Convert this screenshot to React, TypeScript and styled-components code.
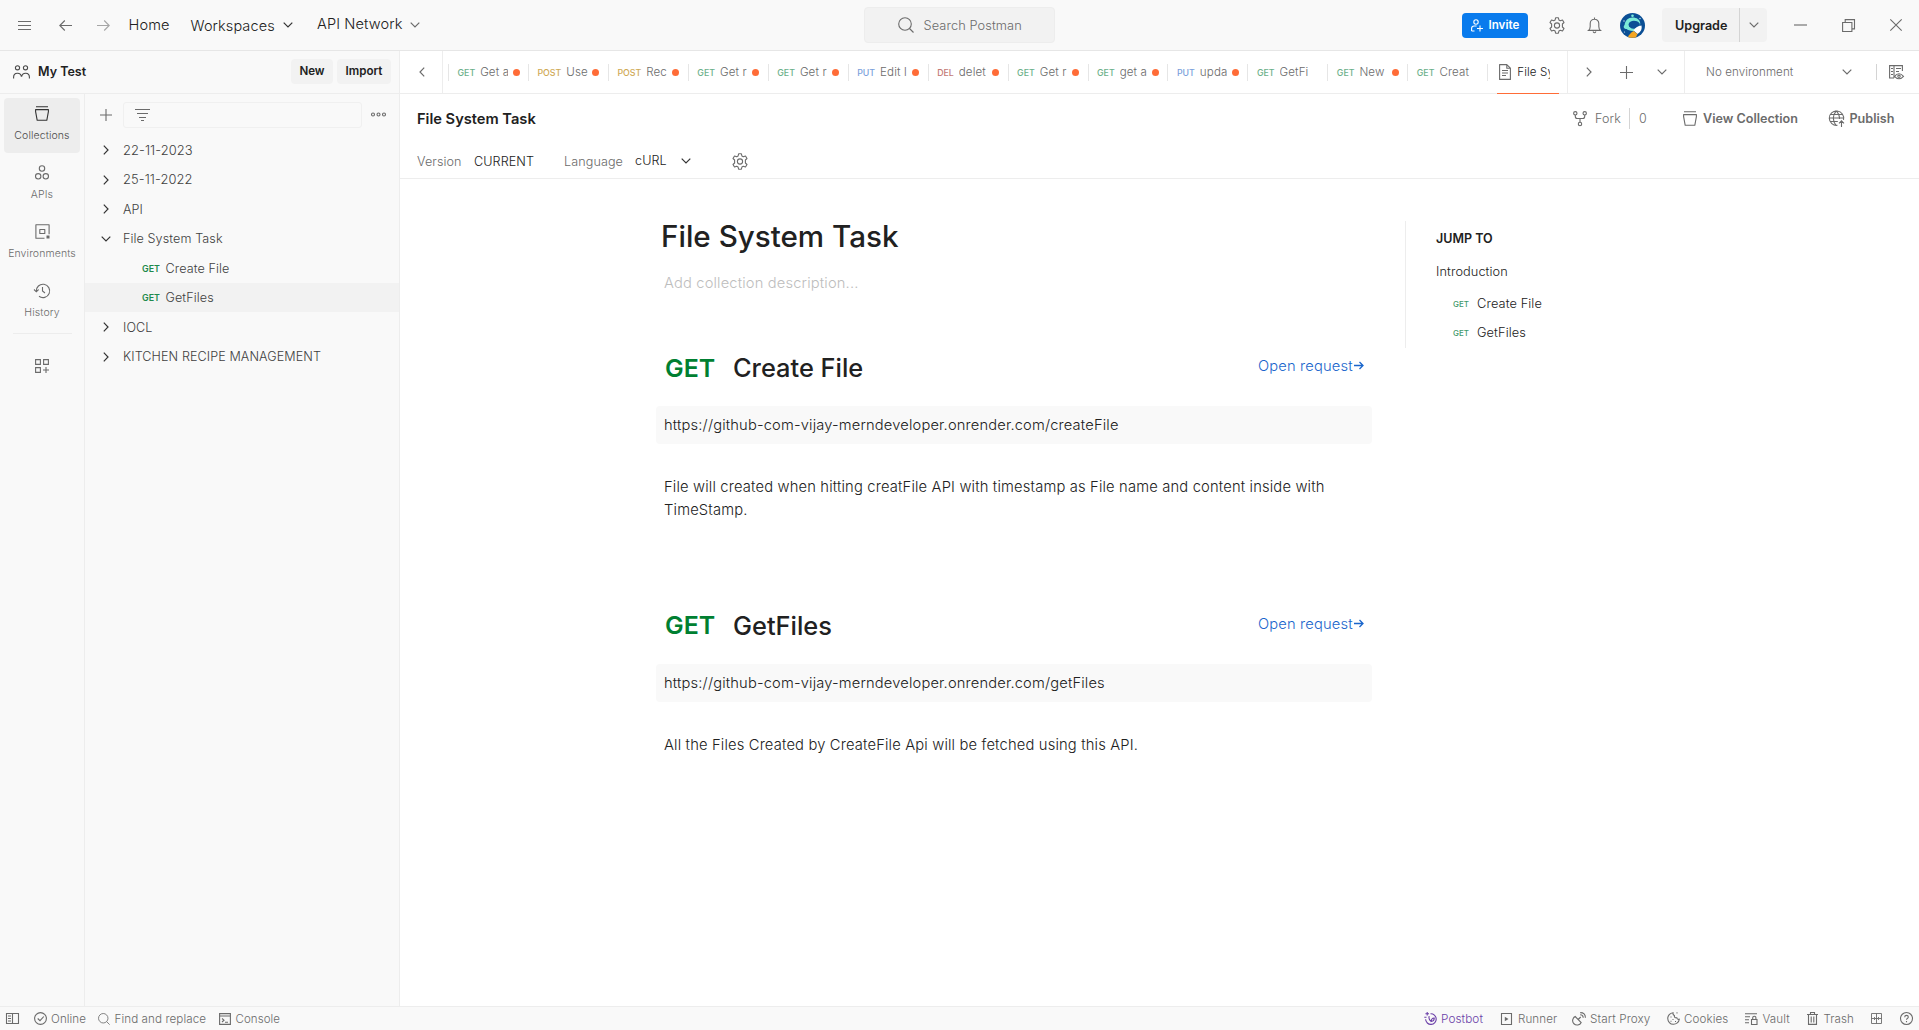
import React from "react";
import styled, { createGlobalStyle } from "styled-components";

const GlobalStyle = createGlobalStyle`
  * { box-sizing: border-box; }
  body {
    margin: 0;
    background: #fff;
    color: #212121;
    font-family: Inter, "Liberation Sans", sans-serif;
    font-weight: 350;
    overflow: hidden;
  }
`;

const line = "#ededed";
const grey = "#6b6b6b";

/* ---------- primitives ---------- */

const Label = styled.span<{ $size?: number; $weight?: number; $color?: string; $w?: number; $ml?: number; $up?: number }>`
  flex: none;
  white-space: nowrap;
  font-size: ${(p) => p.$size ?? 12.5}px;
  font-weight: ${(p) => p.$weight ?? 350};
  letter-spacing: ${(p) => (p.$weight ? "0" : "0.007em")};
  color: ${(p) => p.$color ?? "#212121"};
  width: ${(p) => (p.$w ? `${p.$w}px` : "auto")};
  margin-left: ${(p) => p.$ml ?? 0}px;
  padding-bottom: ${(p) => (p.$up ?? 0) * 2}px;
`;

const Svg = styled.svg<{ $ml?: number; $color?: string; $sw?: number }>`
  flex: none;
  display: block;
  overflow: visible;
  fill: none;
  stroke: ${(p) => p.$color ?? grey};
  stroke-width: ${(p) => p.$sw ?? 1.1};
  margin-left: ${(p) => p.$ml ?? 0}px;
`;

const Bar = styled.span<{ $h: number; $ml?: number; $color?: string }>`
  flex: none;
  width: 1px;
  height: ${(p) => p.$h}px;
  margin-left: ${(p) => p.$ml ?? 0}px;
  background: ${(p) => p.$color ?? "#d4d4d4"};
`;

type IconProps = { w: number; h: number; ml?: number; color?: string; sw?: number; children: React.ReactNode };
const Icon = ({ w, h, ml, color, sw, children }: IconProps) => (
  <Svg width={w} height={h} viewBox={`0 0 ${w} ${h}`} $ml={ml} $color={color} $sw={sw} aria-hidden>
    {children}
  </Svg>
);

type Small = { ml?: number; color?: string };
const ChevronDown = ({ ml, color }: Small) => (
  <Icon w={10} h={6} ml={ml} color={color} sw={1.2}><path d="M.7.7 5 5 9.3.7" /></Icon>
);
const ChevronRight = ({ ml, color }: Small) => (
  <Icon w={6} h={10} ml={ml} color={color} sw={1.2}><path d="M.8.7 5 5 .8 9.3" /></Icon>
);
const Gear = ({ ml }: Small) => (
  <Icon w={16} h={17} ml={ml}>
    <path d="M6.6.8h2.8l.5 2.2 1.4.8 2.2-.8 1.5 2.5L13.4 7v3l1.6 1.5-1.5 2.5-2.2-.8-1.4.8-.5 2.2H6.6L6.1 14l-1.4-.8-2.2.8L1 11.5 2.6 10V7L1 5.5 2.500 3l2.200.8L6.100 3z" strokeLinejoin="round" />
    <circle cx="8" cy="8.500" r="2.600" />
  </Icon>
);
const Bucket = ({ ml, color }: Small) => (
  <Icon w={14} h={15} ml={ml} color={color}>
    <path d="M1 .7h12M.6 3.600h12.800v2l-1.600 8.700H2.200L.6 5.600z" strokeLinejoin="round" />
  </Icon>
);
const Magnifier = ({ w, ml }: { w: number; ml?: number }) => (
  <Svg width={w} height={w} viewBox="0 0 16 16" $ml={ml} $sw={1.1}><circle cx="7" cy="7" r="6.300" /><path d="m11.500 11.500 4 4" /></Svg>
);

/* ---------- frame ---------- */

const Window = styled.div`
  display: flex;
  flex-direction: column;
  width: 1919px;
  height: 1030px;
`;
const TopBar = styled.header`
  display: flex;
  align-items: center;
  flex: none;
  height: 51px;
  background: #f9f9f9;
  border-bottom: 1px solid #e6e6e6;
`;
const TopLeft = styled.div`
  display: flex;
  align-items: center;
  width: 864px;
`;
const SearchBox = styled.div`
  display: flex;
  align-items: center;
  width: 191px;
  height: 36px;
  background: #f2f2f2;
  border: 1px solid #ededed;
  border-radius: 4px;
`;
const Body = styled.div`
  display: flex;
  flex: 1;
  min-height: 0;
`;
const Left = styled.div`
  display: flex;
  flex-direction: column;
  width: 400px;
  background: #f9f9f9;
  border-right: 1px solid ${line};
`;
const Main = styled.main`
  display: flex;
  flex-direction: column;
  flex: 1;
`;

const InviteButton = styled.button`
  display: flex;
  align-items: center;
  width: 66px;
  height: 25px;
  margin-left: 407px;
  padding: 0;
  background: #097bed;
  border: 0;
  border-radius: 4px;
  font-family: inherit;
`;
const UpgradeButton = styled.div`
  display: flex;
  align-items: center;
  width: 105px;
  height: 34px;
  margin-left: 17px;
  background: #f2f2f2;
  border-radius: 4px;
`;

/* ---------- left side ---------- */

const WorkspaceRow = styled.div`
  display: flex;
  align-items: center;
  height: 43px;
  flex: none;
  border-bottom: 1px solid ${line};
`;
const GreyButton = styled.button<{ $w: number; $ml: number }>`
  width: ${(p) => p.$w}px;
  height: 25px;
  margin: 0 0 1px ${(p) => p.$ml}px;
  padding: 0 0 1px;
  background: #f2f2f2;
  border: 0;
  border-radius: 4px;
  font: 600 11.6px Inter, sans-serif;
  color: #212121;
`;
const LeftColumns = styled.div`
  display: flex;
  flex: 1;
`;
const Rail = styled.nav`
  display: flex;
  flex-direction: column;
  align-items: center;
  width: 85px;
  padding-top: 4px;
  border-right: 1px solid ${line};
`;
const RailItem = styled.div<{ $active?: boolean }>`
  display: flex;
  flex-direction: column;
  align-items: center;
  width: 76px;
  height: 55px;
  margin-bottom: 4px;
  padding-top: 7px;
  border-radius: 4px;
  background: ${(p) => (p.$active ? "#ededed" : "transparent")};
`;
const RailIcon = styled.div`
  display: flex;
  align-items: center;
  height: 16px;
  margin-bottom: 8px;
`;
const RailText = styled.span<{ $active?: boolean }>`
  font-size: 10.5px;
  letter-spacing: 0.01em;
  line-height: 13px;
  color: ${(p) => (p.$active ? "#4a4a4a" : grey)};
`;
const RailLine = styled.div`
  width: 59px;
  height: 1px;
  margin: -1px 0 25px;
  background: ${line};
`;
const Explorer = styled.div`
  flex: 1;
`;
const FilterRow = styled.div`
  display: flex;
  align-items: center;
  height: 41.650px;
  padding: 1px 0 1px 15px;
`;
const FilterInput = styled.div`
  display: flex;
  align-items: center;
  width: 239px;
  height: 26px;
  margin-left: 11px;
  padding-left: 11px;
  border: 1px solid #f0f0f0;
  border-radius: 3px;
`;
const TreeRow = styled.div<{ $active?: boolean; $child?: boolean }>`
  display: flex;
  align-items: center;
  height: 29.480px;
  padding-left: ${(p) => (p.$child ? 57 : 16)}px;
  background: ${(p) => (p.$active ? "#f2f2f2" : "transparent")};
`;
const ChevronCell = styled.span`
  display: flex;
  justify-content: center;
  width: 10px;
  margin-right: 12px;
`;

/* ---------- tabs ---------- */

const TabBar = styled.div`
  display: flex;
  flex: none;
  height: 43px;
  border-bottom: 1px solid ${line};
`;
const TabCell = styled.div<{ $w?: number; $border?: boolean; $pl?: number }>`
  display: flex;
  align-items: center;
  width: ${(p) => (p.$w ? `${p.$w}px` : "auto")};
  padding-left: ${(p) => p.$pl ?? 0}px;
  ${(p) => p.$border && `border-right: 1px solid ${line};`}
`;
const Tab = styled.div`
  display: flex;
  align-items: center;
  flex: none;
  width: 79.950px;
`;
const TabContent = styled.div<{ $active?: boolean }>`
  position: relative;
  display: flex;
  align-items: center;
  width: 62px;
  height: 42px;
  margin-left: 8.500px;
  padding-right: ${(p) => (p.$active ? 8.5 : 0)}px;
  &::after {
    content: "";
    display: ${(p) => (p.$active ? "block" : "none")};
    position: absolute;
    left: 0;
    right: 0;
    bottom: -1px;
    height: 1px;
    background: #ff6c37;
  }
`;
const methodColors: Record<string, string> = { GET: "#6bb08a", POST: "#cfa955", PUT: "#7b9fdb", DEL: "#c47a76" };
const TabMethod = styled.span<{ $method: string }>`
  font-size: 8.800px;
  font-weight: 500;
  color: ${(p) => methodColors[p.$method]};
`;
const TabName = styled.span<{ $active?: boolean }>`
  flex: 1;
  margin-left: ${(p) => (p.$active ? 6.5 : 5)}px;
  overflow: hidden;
  white-space: nowrap;
  font-size: 11.600px;
  letter-spacing: 0.01em;
  color: ${(p) => (p.$active ? "#212121" : grey)};
`;
const Dot = styled.span`
  width: 7px;
  height: 7px;
  margin: 1px 0 0 4.500px;
  border-radius: 50%;
  background: #ff6c37;
`;

/* ---------- document ---------- */

const DocHeader = styled.div`
  flex: none;
  height: 85px;
  padding-left: 17px;
  border-bottom: 1px solid ${line};
`;
const HeaderRow = styled.div<{ $h: number }>`
  display: flex;
  align-items: center;
  height: ${(p) => p.$h}px;
`;
const Doc = styled.div`
  display: flex;
  padding-left: 256px;
  letter-spacing: 0.01em;
`;
const Article = styled.article`
  width: 716px;
  padding-top: 37px;
`;
const Title = styled.h1`
  margin: 0 0 15px 5px;
  font-size: 29.600px;
  line-height: 40px;
  font-weight: 500;
  letter-spacing: 0;
`;
const Placeholder = styled.p`
  margin: 0 0 54.600px 8px;
  font-size: 14.700px;
  line-height: 24px;
  color: #bdbdbd;
`;
const Request = styled.section`
  height: 257.800px;
`;
const RequestHead = styled.div`
  display: flex;
  align-items: center;
  height: 36px;
  padding-left: 9px;
`;
const OpenLink = styled.a`
  display: flex;
  align-items: center;
  gap: 1px;
  width: 114px;
  padding-bottom: 3.500px;
  margin-left: auto;
  font-size: 14.700px;
  color: #1a66cc;
`;
const Url = styled.div`
  height: 38px;
  margin-top: 20.400px;
  padding-left: 8px;
  line-height: 38px;
  font-size: 14.700px;
  background: #f9f9f9;
  border-radius: 4px;
`;
const Description = styled.p`
  margin: 32.100px 40px 0 8px;
  font-size: 14.740px;
  line-height: 23px;
`;
const Jump = styled.aside`
  width: 300px;
  height: 127px;
  margin: 42px 0 0 33px;
  padding: 3px 0 0 30px;
  border-left: 1px solid ${line};
`;
const JumpRow = styled.div<{ $h: number; $indent?: boolean }>`
  display: flex;
  align-items: center;
  height: ${(p) => p.$h}px;
  padding-left: ${(p) => (p.$indent ? 17 : 0)}px;
`;

const Footer = styled.footer`
  display: flex;
  align-items: center;
  flex: none;
  height: 24px;
  background: #f9f9f9;
  border-top: 1px solid ${line};
`;
const FooterRight = styled.div`
  display: flex;
  align-items: center;
  margin-left: auto;
  width: 495px;
`;

/* ---------- data ---------- */

const tabs: [string, string, boolean][] = [
  ["GET", "Get a", true], ["POST", "Use", true], ["POST", "Rec", true], ["GET", "Get r", true],
  ["GET", "Get r", true], ["PUT", "Edit l", true], ["DEL", "delet", true], ["GET", "Get r", true],
  ["GET", "get a", true], ["PUT", "upda", true], ["GET", "GetFi", false], ["GET", "New", true],
  ["GET", "Creat", false],
];

const requests = [
  {
    name: "Create File",
    url: "https://github-com-vijay-merndeveloper.onrender.com/createFile",
    text: "File will created when hitting creatFile API with timestamp as File name and content inside with TimeStamp.",
  },
  {
    name: "GetFiles",
    url: "https://github-com-vijay-merndeveloper.onrender.com/getFiles",
    text: "All the Files Created by CreateFile Api will be fetched using this API.",
  },
];

const Folder = ({ name, open }: { name: string; open?: boolean }) => (
  <TreeRow>
    <ChevronCell>{open ? <ChevronDown color="#333" /> : <ChevronRight color="#333" />}</ChevronCell>
    <Label $size={name.includes("-") ? 12.9 : 12.6} $color="#404040">{name}</Label>
  </TreeRow>
);
const Leaf = ({ name, active }: { name: string; active?: boolean }) => (
  <TreeRow $child $active={active}>
    <Label $size={8.9} $weight={600} $color="#1f8a4c" $w={23.5}>GET</Label>
    <Label $size={12.6} $color="#404040">{name}</Label>
  </TreeRow>
);

const Avatar = () => (
  <Svg width={25} height={25} viewBox="0 0 25 25" $ml={19}>
    <g stroke="none">
      <circle cx="12.500" cy="12.500" r="12.500" fill="#0b4f95" />
      <path d="M12.500 4.500c4.500 0 7 2.200 7.600 5 .6 2-.4 3.500-2.600 5l-3.500 3.500c-3.500.3-6.500-1-7.300-2C3.500 16 3 13.500 4.600 12c.4-4.500 3.600-7.500 7.900-7.500z" fill="#7cebd8" />
      <path d="M8.500 11.500c.5-3.500 5-4.500 8.500-3.200 2.500 1 3.500 2.700 2.500 4.700l-4 2.500c-3.500.8-6.800-.8-7-4z" fill="#0b4f95" />
      <circle cx="12.500" cy="2.800" r="1.300" fill="#7cebd8" />
      <path d="M21.500 12.500c.8 3.500-.5 6.500-4 8.500l-4-3.500c2-3 4.500-4.700 8-5z" fill="#fff" />
      <path d="m13.500 18 4 3-1.500 3.200c-2.600 1-5.600.8-8-.2 1-2.500 3-4.200 5.500-6z" fill="#f5a623" />
      <circle cx="4" cy="8" r=".7" fill="#cfe6f7" /><circle cx="20" cy="5.500" r=".7" fill="#cfe6f7" /><circle cx="4.500" cy="19" r=".6" fill="#cfe6f7" />
    </g>
  </Svg>
);

export default function App() {
  return (
    <Window>
      <GlobalStyle />
      <TopBar>
        <TopLeft>
          <Icon w={13} h={9} ml={18} sw={1}><path d="M0 .5h13M0 4.500h13M0 8.500h13" /></Icon>
          <Icon w={13} h={11} ml={28}><path d="M13 5.500H.8M5.800.5l-5 5 5 5" /></Icon>
          <Icon w={13} h={11} ml={24.5} color="#a6a6a6"><path d="M0 5.500h12.200M7.200.5l5 5-5 5" /></Icon>
          <Label $size={14.6} $ml={19} $w={62}>Home</Label>
          <Label $size={14.5} $w={92}>Workspaces</Label>
          <ChevronDown color="#333" />
          <Label $size={14.6} $ml={24.5} $w={92.5} $up={1.5}>API Network</Label>
          <ChevronDown />
        </TopLeft>
        <SearchBox>
          <Magnifier w={16} ml={33} />
          <Label $size={12.8} $ml={9.5} $color={grey}>Search Postman</Label>
        </SearchBox>
        <InviteButton>
          <Icon w={12} h={13} ml={9} color="#fff">
            <circle cx="5" cy="3" r="2.200" /><path d="M.6 12V9.500q0-2.500 2.500-2.500h2.500M3.500 12H.6M9 6.500v6M6 9.500h6" />
          </Icon>
          <Label $size={11.6} $weight={600} $color="#fff" $ml={5.5}>Invite</Label>
        </InviteButton>
        <Gear ml={21} />
        <Icon w={13} h={17} ml={23}>
          <path d="M.5 13.400h12q-1.700-1.500-1.700-4V6.500a4.300 4.300 0 0 0-8.600 0v2.900q0 2.500-1.700 4zM6.500 2.200V.5M5 14.500q1.500 2.500 3 0" />
        </Icon>
        <Avatar />
        <UpgradeButton>
          <Label $size={12.6} $weight={600} $ml={13} $w={64}>Upgrade</Label>
          <Bar $h={34} />
          <ChevronDown ml={9} />
        </UpgradeButton>
        <Icon w={13} h={2} ml={27}><path d="M0 1h13" /></Icon>
        <Icon w={13} h={13} ml={34.5}><path d="M.6 3.500h9.300v9H.6zM3.200 3.500V.6h9.300v9.300H10" /></Icon>
        <Icon w={12} h={12} ml={35.5}><path d="m.3.3 11.400 11.400M11.700.3.3 11.700" /></Icon>
      </TopBar>

      <Body>
        <Left>
          <WorkspaceRow>
            <Icon w={17} h={14} ml={13} color="#4a4a4a">
              <circle cx="4.500" cy="2.800" r="2.100" /><circle cx="12.500" cy="2.800" r="2.100" />
              <path d="M.6 13.500v-1.200c0-5.200 7.200-5.200 7.800-.6M8.600 11.700c.8-4.600 7.800-4.600 7.800.6v1.200" />
            </Icon>
            <Label $weight={600} $ml={8} $w={253} $up={0.5}>My Test</Label>
            <GreyButton $w={42} $ml={0}>New</GreyButton>
            <GreyButton $w={54} $ml={4}>Import</GreyButton>
          </WorkspaceRow>
          <LeftColumns>
            <Rail>
              <RailItem $active>
                <RailIcon><Bucket color="#333" /></RailIcon>
                <RailText $active>Collections</RailText>
              </RailItem>
              <RailItem>
                <RailIcon>
                  <Icon w={14} h={15}><circle cx="7" cy="3.500" r="2.700" /><circle cx="3.200" cy="11.300" r="2.700" /><circle cx="10.800" cy="11.300" r="2.700" /></Icon>
                </RailIcon>
                <RailText>APIs</RailText>
              </RailItem>
              <RailItem>
                <RailIcon>
                  <Icon w={15} h={15}>
                    <path d="M9.500 14.200H.9V.8h13.200v9.400M4.800 5.500h5v4h-5z" strokeLinejoin="round" />
                    <path d="M11.500 11.500h3v3h-3z" fill={grey} stroke="none" />
                  </Icon>
                </RailIcon>
                <RailText>Environments</RailText>
              </RailItem>
              <RailItem>
                <RailIcon>
                  <Icon w={16} h={15}><path d="M2.300 8.500A6.700 6.700 0 1 1 5 13.300M0 6.500l2.300 2.300L4.600 6.500M8.500 4v4l2.500 2" /></Icon>
                </RailIcon>
                <RailText>History</RailText>
              </RailItem>
              <RailLine />
              <Icon w={14} h={14}><path d="M.6.6h4.800v4.800H.6zM8.600.6h4.800v4.800H8.600zM.6 8.600h4.800v4.800H.6zM11 8v6M8 11h6" /></Icon>
            </Rail>
            <Explorer>
              <FilterRow>
                <Icon w={12} h={12}><path d="M6 0v12M0 6h12" /></Icon>
                <FilterInput>
                  <Icon w={15} h={12}><path d="M0 .5h15M2 4.500h11M4 8.500h7M6 11.500h3" /></Icon>
                </FilterInput>
                <Icon w={15} h={5} ml={8.5}><circle cx="2" cy="2.500" r="1.500" /><circle cx="7.500" cy="2.500" r="1.500" /><circle cx="13" cy="2.500" r="1.500" /></Icon>
              </FilterRow>
              <Folder name="22-11-2023" />
              <Folder name="25-11-2022" />
              <Folder name="API" />
              <Folder name="File System Task" open />
              <Leaf name="Create File" />
              <Leaf name="GetFiles" active />
              <Folder name="IOCL" />
              <Folder name="KITCHEN RECIPE MANAGEMENT" />
            </Explorer>
          </LeftColumns>
        </Left>

        <Main>
          <TabBar>
            <TabCell $w={43} $border $pl={18.5}>
              <Icon w={6} h={10} sw={1.2}><path d="M5.200.7 1 5l4.200 4.300" /></Icon>
            </TabCell>
            <TabCell $w={1125} $border $pl={5}>
              {tabs.map(([method, name, dirty], i) => (
                <Tab key={i}>
                  <Bar $h={17} $color="#e6e6e6" />
                  <TabContent>
                    <TabMethod $method={method}>{method}</TabMethod>
                    <TabName>{name}</TabName>
                    {dirty && <Dot />}
                  </TabContent>
                </Tab>
              ))}
              <Tab>
                <Bar $h={17} $color="#e6e6e6" />
                <TabContent $active>
                  <Icon w={12} h={16} ml={2}><path d="M.6.6h7.200l3.600 3.600v11.200H.6zM7.800.6v3.600h3.600M3 6.500h6M3 9h6M3 11.500h4" strokeLinejoin="round" /></Icon>
                  <TabName $active>File Sy</TabName>
                </TabContent>
              </Tab>
            </TabCell>
            <TabCell $w={117} $border>
              <ChevronRight ml={18} />
              <Icon w={13} h={13} ml={28}><path d="M6.500 0v13M0 6.500h13" /></Icon>
              <ChevronDown ml={24} />
            </TabCell>
            <TabCell>
              <Label $size={11.6} $color={grey} $ml={21} $w={136}>No environment</Label>
              <ChevronDown />
              <Bar $h={16} $ml={24} />
              <Icon w={15} h={15} ml={12}>
                <path d="M5 13H.6V.6h12.800V6M5 .6V13M2 3.500h2M2 6.500h2M2 9.500h2M7 3.500h5M7 6.500h3" />
                <path d="M5.500 11.300q4.500-5 9 0-4.500 5-9 0z" /><circle cx="10" cy="11.300" r="1.200" />
              </Icon>
            </TabCell>
          </TabBar>

          <DocHeader>
            <HeaderRow $h={49}>
              <Label $size={14.65} $weight={600} $w={1156}>File System Task</Label>
              <Icon w={14} h={15}>
                <circle cx="2.300" cy="2.300" r="1.700" /><circle cx="11.700" cy="2.300" r="1.700" /><circle cx="7" cy="13" r="1.700" />
                <path d="M2.300 4v1.500q0 2 2 2h5.400q2 0 2-2V4M7 7.500v3.800" />
              </Icon>
              <Label $size={12.5} $ml={8} $color={grey} $w={34}>Fork</Label>
              <Bar $h={21} />
              <Label $size={12.5} $ml={9} $color={grey} $w={44}>0</Label>
              <Bucket />
              <Label $size={12.6} $weight={600} $color={grey} $ml={6} $w={124.5}>View Collection</Label>
              <Icon w={17} h={17}>
                <path d="M9.500 15.300a7.200 7.200 0 1 1 6-5.500M1 8h14.500M2 4.500h12.500M1.800 11.500h8M8.200.8Q2.500 8 8 15.300M8.200.8q3.500 3.800 3.300 8.200M13.500 17v-6M11 13.300l2.500-2.500 2.500 2.500" />
              </Icon>
              <Label $size={12.6} $weight={600} $color={grey} $ml={5}>Publish</Label>
            </HeaderRow>
            <HeaderRow $h={36}>
              <Label $size={12.6} $color={grey} $w={57}>Version</Label>
              <Label $size={12.6} $w={90}>CURRENT</Label>
              <Label $size={12.6} $color={grey} $w={71}>Language</Label>
              <Label $size={12.6} $up={1} $w={45.5}>cURL</Label>
              <ChevronDown color="#333" />
              <Gear ml={41} />
            </HeaderRow>
          </DocHeader>

          <Doc>
            <Article>
              <Title>File System Task</Title>
              <Placeholder>Add collection description...</Placeholder>
              {requests.map((r) => (
                <Request key={r.name}>
                  <RequestHead>
                    <Label $size={24.9} $weight={600} $color="#007f31" $w={68}>GET</Label>
                    <Label $size={25.4} $weight={500}>{r.name}</Label>
                    <OpenLink>
                      Open request
                      <Icon w={10} h={9} color="#1a66cc" sw={1.3}><path d="M0 4.500h9M5.500 1 9 4.500 5.500 8" /></Icon>
                    </OpenLink>
                  </RequestHead>
                  <Url>{r.url}</Url>
                  <Description>{r.text}</Description>
                </Request>
              ))}
            </Article>
            <Jump>
              <JumpRow $h={29}><Label $weight={600}>JUMP TO</Label></JumpRow>
              <JumpRow $h={36}><Label $size={12.75}>Introduction</Label></JumpRow>
              {requests.map((r) => (
                <JumpRow $h={29} $indent key={r.name}>
                  <Label $size={7.9} $weight={500} $color="#3f9a6b" $w={24}>GET</Label>
                  <Label $size={12.8}>{r.name}</Label>
                </JumpRow>
              ))}
            </Jump>
          </Doc>
        </Main>
      </Body>

      <Footer>
        <Icon w={13} h={11} ml={6}><path d="M.5.5h12v10H.5zM6.500.5v10M2 3h3M2 5.500h3M2 8h3" /></Icon>
        <Icon w={13} h={13} ml={15}><circle cx="6.500" cy="6.500" r="5.900" /><path d="M3.700 6.500 6 8.700l3.800-4.200" /></Icon>
        <Label $size={11.6} $color={grey} $ml={4} $w={47}>Online</Label>
        <Magnifier w={12} />
        <Label $size={11.65} $color={grey} $ml={4.5} $w={104.5}>Find and replace</Label>
        <Icon w={12} h={12}><path d="M.6.6h10.800v10.800H.6zM.6 3h10.800M3 5.500l2 1.700L3 9M6 9.200h3" /></Icon>
        <Label $size={11.5} $color={grey} $ml={4.5}>Console</Label>
        <FooterRight>
          <Icon w={13} h={13} color="#6b3fa8">
            <path d="M6.500 1.800a5.300 5.300 0 1 1-4.900 5.500M3.200 0v3.600M1.400 1.800H5M.3 5.200h2.200M5.200 4.200q-1 3.300 2 5.300M7.200 9.500q3.300-.5 3-3.500-3 .2-3 3.500z" />
          </Icon>
          <Label $size={11.75} $color="#6b3fa8" $ml={4} $w={60}>Postbot</Label>
          <Icon w={11} h={12}><path d="M.5.5h10v11H.5z" /><path d="M3.800 3.700v4.600L7.500 6z" fill={grey} stroke="none" /></Icon>
          <Label $size={11.6} $color={grey} $ml={6} $w={55}>Runner</Label>
          <Icon w={13} h={13}><path d="M2.200 4.500a4.500 4.500 0 1 0 6 6zM5.200 7.500l2.500-2.500M7.200 2.800q3 0 3 3M7.200.6q5.200 0 5.200 5.200" /></Icon>
          <Label $size={11.75} $color={grey} $ml={4} $w={77}>Start Proxy</Label>
          <Icon w={13} h={13}>
            <path d="M6 .7a5.800 5.800 0 1 0 6.300 6.500q-2 .6-2.600-1.500-2.600.3-2.300-2.200Q5.700 3 6 .7zM3.500 5h1M5.500 7.500h1M3.500 9.300h1M8 9.500h1M9.500.9h1" />
          </Icon>
          <Label $size={11.6} $color={grey} $ml={4} $w={60.5}>Cookies</Label>
          <Icon w={13} h={12}><path d="M0 .8h12M0 3.800h5M0 6.800h4M0 9.800h4M6.500 6.500h5.500v5H6.500zM7.700 6.500V5q0-1.700 1.600-1.700T10.900 5v1.500" /></Icon>
          <Label $size={11.6} $color={grey} $ml={5} $w={44}>Vault</Label>
          <Icon w={11} h={13}><path d="M0 2.500h11M3.500 2.500v-2h4v2M1.500 2.500v9.900h8V2.500M4.200 4.500v6M6.800 4.500v6" /></Icon>
          <Label $size={11.6} $color={grey} $ml={6} $w={47.5}>Trash</Label>
          <Icon w={11} h={11}><path d="M.5.5h10v10H.5zM5.500.5v10M.5 5.500h10M3 4l1.500 1.500L3 7M8 4 6.500 5.500 8 7" strokeWidth=".9" /></Icon>
          <Icon w={13} h={13} ml={18}><circle cx="6.500" cy="6.500" r="6" /><path d="M4.700 5.200q0-1.800 1.800-1.800t1.800 1.700q0 .9-.9 1.400t-.9 1.300M6.500 9v1.200" /></Icon>
        </FooterRight>
      </Footer>
    </Window>
  );
}
